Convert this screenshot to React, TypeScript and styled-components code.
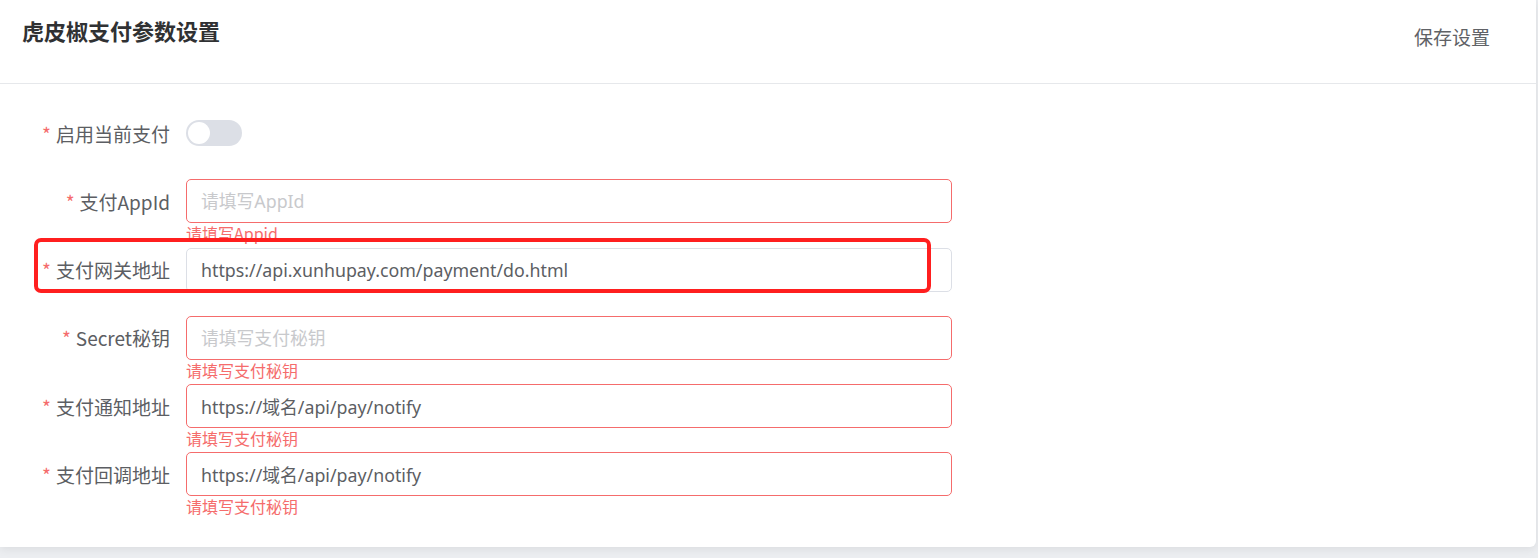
import React, { FC } from "react";
import styled, { createGlobalStyle } from "styled-components";

const GlobalStyle = createGlobalStyle`
  html, body {
    margin: 0;
    padding: 0;
    background: #eceef1;
    font-family: "Noto Sans", "Noto Sans CJK SC", sans-serif;
  }
  * { box-sizing: border-box; }
`;

const Card = styled.div`
  width: 1536px;
  background: #fff;
  border-radius: 0 0 6px 0;
  box-shadow: 0 2px 10px rgba(0, 0, 0, 0.08);
  margin-bottom: 12px;
`;

const Header = styled.div`
  height: 84px;
  display: flex;
  justify-content: space-between;
  align-items: flex-start;
  padding: 15px 46px 0 22px;
  border-bottom: 1px solid #e6e8eb;
`;

const Title = styled.h2`
  margin: 0;
  font-size: 22px;
  line-height: 30px;
  font-weight: 700;
  color: #303133;
  font-family: "Noto Sans CJK SC", sans-serif;
`;

const SaveButton = styled.button`
  margin-top: 8px;
  border: none;
  background: none;
  padding: 0;
  font-size: 19px;
  line-height: 28px;
  color: #606266;
  cursor: pointer;
  font-family: "Noto Sans CJK SC", sans-serif;
`;

const Form = styled.form`
  padding: 27px 0 26px 0;
`;

const Row = styled.div`
  position: relative;
  display: flex;
  align-items: center;
  height: 44px;
  margin-bottom: 24.25px;
`;

const Label = styled.label`
  width: 186px;
  padding-right: 16px;
  text-align: right;
  font-size: 19px;
  color: #5c5e63;
  font-family: "Noto Sans CJK SC", sans-serif;
  white-space: nowrap;

  &::before {
    content: "*";
    color: #f56c6c;
    margin-right: 5px;
  }
`;

const Field = styled.div`
  position: relative;
  width: 766px;
  height: 44px;
`;

const Input = styled.input<{ $error?: boolean }>`
  width: 100%;
  height: 100%;
  border: 1px solid ${(p) => (p.$error ? "#f56c6c" : "#dcdfe6")};
  border-radius: 5px;
  padding: 0 14px;
  font-size: 17.8px;
  color: #5c5e63;
  font-family: "Noto Sans", "Noto Sans CJK SC", sans-serif;
  outline: none;
  background: #fff;

  &::placeholder {
    color: #c8c9cc;
  }
`;

const ErrorText = styled.div`
  position: absolute;
  left: 0;
  top: 100%;
  padding-top: 2px;
  font-size: 16px;
  line-height: 1;
  color: #f56c6c;
  font-family: "Noto Sans CJK SC", sans-serif;
  white-space: nowrap;
`;

const Switch = styled.span<{ $on?: boolean }>`
  display: inline-flex;
  align-items: center;
  width: 56px;
  height: 26px;
  border-radius: 13px;
  background: ${(p) => (p.$on ? "#409eff" : "#dcdfe6")};
  padding: 2px;
  cursor: pointer;

  &::after {
    content: "";
    width: 22px;
    height: 22px;
    border-radius: 50%;
    background: #fff;
  }
`;

const Highlight = styled.div`
  position: absolute;
  left: 34px;
  top: -10px;
  width: 897px;
  height: 55px;
  border: 4px solid #ff1f1f;
  border-radius: 7px;
  pointer-events: none;
`;

interface FieldItem {
  label: string;
  value?: string;
  placeholder?: string;
  error?: string;
  highlight?: boolean;
}

const fields: FieldItem[] = [
  { label: "支付AppId", placeholder: "请填写AppId", error: "请填写Appid" },
  { label: "支付网关地址", value: "https://api.xunhupay.com/payment/do.html", highlight: true },
  { label: "Secret秘钥", placeholder: "请填写支付秘钥", error: "请填写支付秘钥" },
  { label: "支付通知地址", value: "https://域名/api/pay/notify", error: "请填写支付秘钥" },
  { label: "支付回调地址", value: "https://域名/api/pay/notify", error: "请填写支付秘钥" },
];

const App: FC = () => {
  return (
    <>
      <GlobalStyle />
      <Card>
        <Header>
          <Title>虎皮椒支付参数设置</Title>
          <SaveButton type="button">保存设置</SaveButton>
        </Header>
        <Form onSubmit={(e) => e.preventDefault()}>
          <Row>
            <Label>启用当前支付</Label>
            <Switch />
          </Row>
          {fields.map((f) => (
            <Row key={f.label}>
              <Label>{f.label}</Label>
              <Field>
                <Input
                  $error={!!f.error}
                  defaultValue={f.value}
                  placeholder={f.placeholder}
                />
                {f.error && <ErrorText>{f.error}</ErrorText>}
              </Field>
              {f.highlight && <Highlight />}
            </Row>
          ))}
        </Form>
      </Card>
    </>
  );
};

export default App;
